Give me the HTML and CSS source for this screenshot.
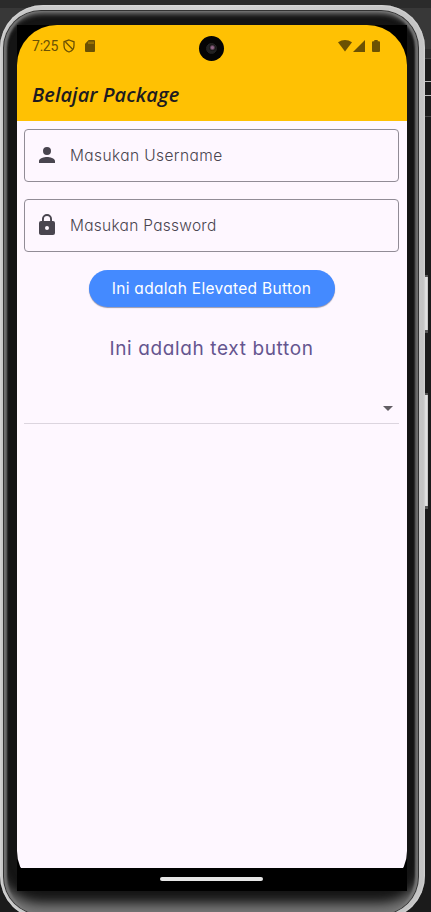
FILE: index.html
```html
<!DOCTYPE html>
<html lang="id">
<head>
<meta charset="utf-8">
<title>Belajar Package</title>
<link rel="stylesheet" href="styles.css">
</head>
<body>
<div class="desktop">
  <div class="backdrop"></div>
  <span class="side-key power"></span>
  <span class="side-key volume"></span>
  <div class="phone"><div class="seam"><div class="bezel"><div class="glass">
    <div class="screen">
      <header class="top">
        <div class="status">
          <span class="clock">7:25</span>
          <svg class="shield" viewBox="0 0 12 14"><path d="M6 1 11 2.8V6.5C11 9.5 9 12 6 13 3 12 1 9.5 1 6.5V2.8Z" fill="none" stroke="currentColor" stroke-width="1.3"/><path d="M2.5 3 9.8 10.5" stroke="currentColor" stroke-width="1.3"/></svg>
          <svg class="card" viewBox="0 0 10 12"><path d="M3.7 0H9q1 0 1 1V11q0 1-1 1H1Q0 12 0 11V3.8Z" fill="currentColor"/><path d="M4 1.6V4M6 1.6V4M8 1.6V4" stroke="#ffc107" stroke-width=".6"/></svg>
          <span class="grow"></span>
          <svg class="wifi" viewBox="0 0 14 12"><path d="M0 2.2Q7-2 14 2.2L7 11.5Z" fill="currentColor"/></svg>
          <svg class="signal" viewBox="0 0 12 12"><path d="M12 0V12H0Z" fill="currentColor"/></svg>
          <svg class="battery" viewBox="0 0 8 12"><path d="M2.3 0H5.7V1.2H7Q8 1.2 8 2.2V11Q8 12 7 12H1Q0 12 0 11V2.2Q0 1.2 1 1.2H2.3Z" fill="currentColor"/></svg>
        </div>
        <h1>Belajar Package</h1>
      </header>
      <main>
        <label class="field">
          <svg viewBox="0 0 24 24"><path d="M12 12a4 4 0 1 0 0-8 4 4 0 0 0 0 8Zm0 2c-2.67 0-8 1.34-8 4v2h16v-2c0-2.66-5.33-4-8-4Z"/></svg>
          <span class="hint user">Masukan Username</span>
        </label>
        <label class="field">
          <svg viewBox="0 0 24 24"><path d="M18 8h-1V6A5 5 0 0 0 7 6v2H6a2 2 0 0 0-2 2v10c0 1.1.9 2 2 2h12a2 2 0 0 0 2-2V10a2 2 0 0 0-2-2Zm-6 9a2 2 0 1 1 0-4 2 2 0 0 1 0 4Zm3.1-9H8.9V6a3.1 3.1 0 0 1 6.2 0Z"/></svg>
          <span class="hint pass">Masukan Password</span>
        </label>
        <button class="elevated"><span>Ini adalah Elevated Button</span></button>
        <button class="text-button"><span>Ini adalah text button</span></button>
        <div class="dropdown"><svg viewBox="0 0 10 5"><path d="M0 0H10L5 5Z"/></svg></div>
      </main>
      <footer><span></span></footer>
      <div class="camera"><i></i></div>
    </div>
  </div></div></div></div>
</div>
</body>
</html>
```
FILE: styles.css
```css
* { box-sizing: border-box; }
body { margin: 0; overflow: hidden; font-family: Inter, "Liberation Sans", sans-serif; }
.desktop { position: relative; width: 431px; height: 912px; overflow: hidden; background: #1b1b1b; padding: 5px 6px 0 0; }
.backdrop {
  position: absolute; inset: 0 0 auto 0; height: 117px;
  background: linear-gradient(#2b2b2b 0 8px, #383838 8px 49px, #2b2b2b 49px 58px, #444 58px 59px, #1b1b1b 59px 81px, #bbb 81px 82px, #1b1b1b 82px 95px, #bbb 95px 96px, #1b1b1b 96px 116px, #444 116px);
}
.side-key { position: absolute; left: 424px; width: 4px; border: solid #555; border-width: 2px 0 3px; background: linear-gradient(90deg, #aaa, #eee 50%, #bbb); }
.power { top: 275px; height: 58px; }
.volume { top: 393px; height: 116px; }
.phone {
  position: relative; height: 914px; padding: 5px 6px 4px 3px; border-radius: 43px;
  background: linear-gradient(90deg, #c8c8c8, #d4d4d4 50%, #c4c4c4);
  box-shadow: inset 0 0 2px #eee;
}
.seam { height: 100%; padding: 1px; border-radius: 38px; background: #333; }
.bezel {
  height: 100%; padding: 14px 11px 19px 13px; border-radius: 37px; background: #141414;
  box-shadow: inset 0 -19px 12px -8px #777, inset 0 4px 5px -1px #777, inset 3px 0 2px #6c6c6c, inset -3px 0 2px #6c6c6c;
}
.glass { width: 390px; height: 866px; background: #000; }
.screen { position: relative; display: flex; flex-direction: column; width: 390px; height: 866px; border-radius: 40px; overflow: hidden; }
.top { height: 96px; background: #ffc107; background: #ffc103; }
.status { display: flex; align-items: center; height: 42px; padding: 0 27px 0 15px; color: #6b5103; }
.clock { width: 31px; font: 14px/16px Roboto, sans-serif; letter-spacing: -.2px; white-space: nowrap; }
.shield { width: 12px; height: 14px; }
.card { width: 10px; height: 12px; margin-left: 10px; }
.grow { flex: 1; }
.wifi { width: 14px; height: 12px; }
.signal { width: 12px; height: 12px; margin-left: 1px; }
.battery { width: 8px; height: 12px; margin-left: 7px; }
h1 { margin: 14px 0 0 15px; font: italic 600 20px/28px "Open Sans", sans-serif; letter-spacing: .06px; color: #1d1b20; white-space: nowrap; }
main { flex: 1; display: flex; flex-direction: column; align-items: center; padding: 7.5px 8px 0 7px; background: #fef7ff; }
.field { display: flex; align-items: center; width: 100%; height: 53px; margin-bottom: 17px; border: 1px solid #918c96; border-radius: 4px; padding-left: 10px; }
.field svg { width: 24px; height: 24px; fill: #49454f; }
.hint { margin-left: 11px; font-size: 15.5px; font-weight: 350; color: #49454f; white-space: nowrap; font-feature-settings: "cv11"; }
.user { letter-spacing: .4px; }
.pass { letter-spacing: .27px; }
button { border: 0; padding: 0; font-family: Inter, "Liberation Sans", sans-serif; font-feature-settings: "cv11"; white-space: nowrap; }
.elevated { width: 246px; height: 37px; margin-top: 1.5px; border-radius: 19px; background: #448aff; color: #fff; font-size: 15.5px; letter-spacing: .31px; box-shadow: 0 1px 1px #9b98ab; }
.text-button { height: 40px; margin-top: 21px; background: none; color: #65558f; font-size: 19px; letter-spacing: .63px; }
.dropdown { display: flex; align-items: center; justify-content: flex-end; width: 100%; height: 32px; margin-top: 24px; padding: 2px 6px 0 0; border-bottom: 1px solid #dcd5df; }
.dropdown svg { width: 10px; height: 5px; fill: #625e64; }
footer { display: flex; justify-content: center; height: 23px; padding-top: 9px; background: #000; }
footer span { width: 103px; height: 4px; border-radius: 2px; background: #e6e6e6; margin-right: 1px; }
.camera { position: absolute; left: 182px; top: 11px; width: 25px; height: 25px; border-radius: 50%; background: #050505; display: grid; place-items: center; }
.camera i { width: 11px; height: 11px; border-radius: 50%; border: 1px solid #252525; background: radial-gradient(circle at 60% 40%, #916586 0 1px, #171717 3px, #222 4px); }
```
